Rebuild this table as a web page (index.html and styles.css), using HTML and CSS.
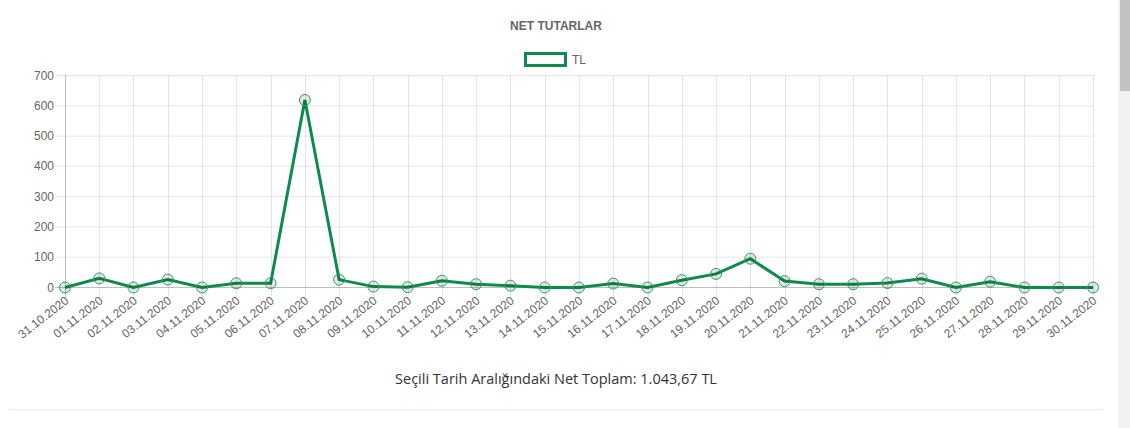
FILE: index.html
```html
<!DOCTYPE html>
<html lang="tr">
<head>
<meta charset="utf-8">
<title>Net Tutarlar</title>
<link rel="stylesheet" href="styles.css">
</head>
<body>
<div class="page">
  <main class="main">
    <svg class="chart" width="1094" height="350" viewBox="9 0 1094 350" xmlns="http://www.w3.org/2000/svg">
      <text class="chart-title" x="556" y="30">NET TUTARLAR</text>
      <rect class="legend-box" x="525.5" y="53.5" width="40" height="12"/>
      <text class="legend-text" x="572" y="63.5">TL</text>

      <g class="grid">
        <line x1="55" y1="75.5" x2="1093.5" y2="75.5"/>
        <line x1="55" y1="105.8" x2="1093.5" y2="105.8"/>
        <line x1="55" y1="136.1" x2="1093.5" y2="136.1"/>
        <line x1="55" y1="166.4" x2="1093.5" y2="166.4"/>
        <line x1="55" y1="196.6" x2="1093.5" y2="196.6"/>
        <line x1="55" y1="226.9" x2="1093.5" y2="226.9"/>
        <line x1="55" y1="257.2" x2="1093.5" y2="257.2"/>

        <line x1="99.5" y1="75" x2="99.5" y2="297"/>
        <line x1="133.5" y1="75" x2="133.5" y2="297"/>
        <line x1="168.5" y1="75" x2="168.5" y2="297"/>
        <line x1="202.5" y1="75" x2="202.5" y2="297"/>
        <line x1="236.5" y1="75" x2="236.5" y2="297"/>
        <line x1="271.5" y1="75" x2="271.5" y2="297"/>
        <line x1="305.5" y1="75" x2="305.5" y2="297"/>
        <line x1="339.5" y1="75" x2="339.5" y2="297"/>
        <line x1="373.5" y1="75" x2="373.5" y2="297"/>
        <line x1="408.5" y1="75" x2="408.5" y2="297"/>
        <line x1="442.5" y1="75" x2="442.5" y2="297"/>
        <line x1="476.5" y1="75" x2="476.5" y2="297"/>
        <line x1="510.5" y1="75" x2="510.5" y2="297"/>
        <line x1="545.5" y1="75" x2="545.5" y2="297"/>
        <line x1="579.5" y1="75" x2="579.5" y2="297"/>
        <line x1="613.5" y1="75" x2="613.5" y2="297"/>
        <line x1="648.5" y1="75" x2="648.5" y2="297"/>
        <line x1="682.5" y1="75" x2="682.5" y2="297"/>
        <line x1="716.5" y1="75" x2="716.5" y2="297"/>
        <line x1="750.5" y1="75" x2="750.5" y2="297"/>
        <line x1="785.5" y1="75" x2="785.5" y2="297"/>
        <line x1="819.5" y1="75" x2="819.5" y2="297"/>
        <line x1="853.5" y1="75" x2="853.5" y2="297"/>
        <line x1="887.5" y1="75" x2="887.5" y2="297"/>
        <line x1="922.5" y1="75" x2="922.5" y2="297"/>
        <line x1="956.5" y1="75" x2="956.5" y2="297"/>
        <line x1="990.5" y1="75" x2="990.5" y2="297"/>
        <line x1="1024.5" y1="75" x2="1024.5" y2="297"/>
        <line x1="1059.5" y1="75" x2="1059.5" y2="297"/>
        <line x1="1093.5" y1="75" x2="1093.5" y2="297"/>
      </g>
      <g class="zero">
        <line x1="55" y1="287.5" x2="1093.5" y2="287.5"/>
        <line x1="65.5" y1="75" x2="65.5" y2="297"/>
      </g>

      <g class="y-labels">
        <text x="54" y="75.5">700</text>
        <text x="54" y="105.8">600</text>
        <text x="54" y="136.1">500</text>
        <text x="54" y="166.4">400</text>
        <text x="54" y="196.6">300</text>
        <text x="54" y="226.9">200</text>
        <text x="54" y="257.2">100</text>
        <text x="54" y="287.5">0</text>
      </g>

      <g class="x-labels">
        <text transform="translate(67 299) rotate(-38)">31.10.2020</text>
        <text transform="translate(101.3 299) rotate(-38)">01.11.2020</text>
        <text transform="translate(135.5 299) rotate(-38)">02.11.2020</text>
        <text transform="translate(169.8 299) rotate(-38)">03.11.2020</text>
        <text transform="translate(204.1 299) rotate(-38)">04.11.2020</text>
        <text transform="translate(238.3 299) rotate(-38)">05.11.2020</text>
        <text transform="translate(272.6 299) rotate(-38)">06.11.2020</text>
        <text transform="translate(306.9 299) rotate(-38)">07.11.2020</text>
        <text transform="translate(341.1 299) rotate(-38)">08.11.2020</text>
        <text transform="translate(375.4 299) rotate(-38)">09.11.2020</text>
        <text transform="translate(409.7 299) rotate(-38)">10.11.2020</text>
        <text transform="translate(443.9 299) rotate(-38)">11.11.2020</text>
        <text transform="translate(478.2 299) rotate(-38)">12.11.2020</text>
        <text transform="translate(512.5 299) rotate(-38)">13.11.2020</text>
        <text transform="translate(546.7 299) rotate(-38)">14.11.2020</text>
        <text transform="translate(581 299) rotate(-38)">15.11.2020</text>
        <text transform="translate(615.3 299) rotate(-38)">16.11.2020</text>
        <text transform="translate(649.5 299) rotate(-38)">17.11.2020</text>
        <text transform="translate(683.8 299) rotate(-38)">18.11.2020</text>
        <text transform="translate(718.1 299) rotate(-38)">19.11.2020</text>
        <text transform="translate(752.3 299) rotate(-38)">20.11.2020</text>
        <text transform="translate(786.6 299) rotate(-38)">21.11.2020</text>
        <text transform="translate(820.9 299) rotate(-38)">22.11.2020</text>
        <text transform="translate(855.1 299) rotate(-38)">23.11.2020</text>
        <text transform="translate(889.4 299) rotate(-38)">24.11.2020</text>
        <text transform="translate(923.7 299) rotate(-38)">25.11.2020</text>
        <text transform="translate(957.9 299) rotate(-38)">26.11.2020</text>
        <text transform="translate(992.2 299) rotate(-38)">27.11.2020</text>
        <text transform="translate(1026.5 299) rotate(-38)">28.11.2020</text>
        <text transform="translate(1060.7 299) rotate(-38)">29.11.2020</text>
        <text transform="translate(1095 299) rotate(-38)">30.11.2020</text>
      </g>

      <polyline class="data-line" points="65,287.5 99.3,278.4 133.5,287.5 167.8,279.6 202.1,287.5 236.3,283.3 270.6,283.3 304.9,100 339.1,279.6 373.4,286.6 407.7,287.2 441.9,280.8 476.2,284.2 510.5,285.7 544.7,287.5 579,287.5 613.3,283.6 647.5,287.5 681.8,280.2 716.1,273.9 750.3,258.7 784.6,281.1 818.9,284.2 853.1,284.2 887.4,283 921.7,278.7 955.9,287.5 990.2,281.7 1024.5,287.5 1058.7,287.5 1093,287.5"/>

      <g class="points">
        <circle cx="65" cy="287.5" r="5.5"/>
        <circle cx="99.3" cy="278.4" r="5.5"/>
        <circle cx="133.5" cy="287.5" r="5.5"/>
        <circle cx="167.8" cy="279.6" r="5.5"/>
        <circle cx="202.1" cy="287.5" r="5.5"/>
        <circle cx="236.3" cy="283.3" r="5.5"/>
        <circle cx="270.6" cy="283.3" r="5.5"/>
        <circle cx="304.9" cy="100" r="5.5"/>
        <circle cx="339.1" cy="279.6" r="5.5"/>
        <circle cx="373.4" cy="286.6" r="5.5"/>
        <circle cx="407.7" cy="287.2" r="5.5"/>
        <circle cx="441.9" cy="280.8" r="5.5"/>
        <circle cx="476.2" cy="284.2" r="5.5"/>
        <circle cx="510.5" cy="285.7" r="5.5"/>
        <circle cx="544.7" cy="287.5" r="5.5"/>
        <circle cx="579" cy="287.5" r="5.5"/>
        <circle cx="613.3" cy="283.6" r="5.5"/>
        <circle cx="647.5" cy="287.5" r="5.5"/>
        <circle cx="681.8" cy="280.2" r="5.5"/>
        <circle cx="716.1" cy="273.9" r="5.5"/>
        <circle cx="750.3" cy="258.7" r="5.5"/>
        <circle cx="784.6" cy="281.1" r="5.5"/>
        <circle cx="818.9" cy="284.2" r="5.5"/>
        <circle cx="853.1" cy="284.2" r="5.5"/>
        <circle cx="887.4" cy="283" r="5.5"/>
        <circle cx="921.7" cy="278.7" r="5.5"/>
        <circle cx="955.9" cy="287.5" r="5.5"/>
        <circle cx="990.2" cy="281.7" r="5.5"/>
        <circle cx="1024.5" cy="287.5" r="5.5"/>
        <circle cx="1058.7" cy="287.5" r="5.5"/>
        <circle cx="1093" cy="287.5" r="5.5"/>
      </g>
    </svg>

    <p class="summary">Seçili Tarih Aralığındaki Net Toplam: 1.043,67 TL</p>
    <div class="divider"></div>
  </main>
  <div class="scrollbar"><div class="scrollbar-thumb"></div></div>
</div>
</body>
</html>
```

FILE: styles.css
```css
html, body {
  margin: 0;
  padding: 0;
  background: #ffffff;
}

.page {
  display: flex;
  height: 428px;
  overflow: hidden;
}

.main {
  width: 1118px;
  box-sizing: border-box;
  padding: 0 15px 0 9px;
  flex: none;
}

.chart {
  display: block;
  font-family: "Liberation Sans", Arial, sans-serif;
}

.chart-title {
  font-size: 12px;
  font-weight: bold;
  fill: #666666;
  text-anchor: middle;
}

.legend-box {
  fill: #ffffff;
  stroke: #0f8a4f;
  stroke-width: 3;
}

.legend-text {
  font-size: 12px;
  fill: #666666;
}

.grid line {
  stroke: rgba(0, 0, 0, 0.1);
  stroke-width: 1;
}

.zero line {
  stroke: rgba(0, 0, 0, 0.25);
  stroke-width: 1;
}

.y-labels text {
  font-size: 12px;
  fill: #666666;
  text-anchor: end;
  dominant-baseline: central;
}

.x-labels text {
  font-size: 12px;
  fill: #666666;
  text-anchor: end;
  dominant-baseline: central;
}

.data-line {
  fill: none;
  stroke: #0f8a4f;
  stroke-width: 3;
  stroke-linejoin: miter;
}

.points circle {
  fill: rgba(0, 0, 0, 0.1);
  stroke: #2e9e62;
  stroke-width: 1;
}

.summary {
  margin: 19px 0 0;
  font-family: "Open Sans", sans-serif;
  font-size: 14.5px;
  line-height: 20px;
  color: #333333;
  text-align: center;
}

.divider {
  margin-top: 20px;
  border-top: 1px solid #ebebeb;
}

.scrollbar {
  width: 12px;
  flex: none;
  background: #f1f1f1;
}

.scrollbar-thumb {
  width: 10px;
  height: 91px;
  margin-left: 2px;
  background: #c1c1c1;
}
```
